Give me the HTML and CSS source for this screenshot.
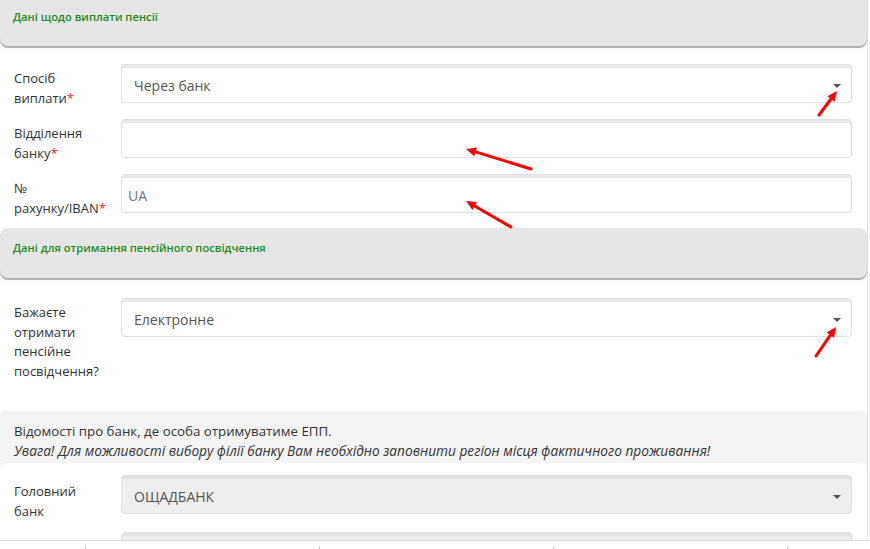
FILE: index.html
```html
<!DOCTYPE html>
<html lang="uk">
<head>
<meta charset="utf-8">
<title>Дані щодо виплати пенсії</title>
<link rel="stylesheet" href="styles.css">
</head>
<body>
<div class="page">
  <div class="section-head first"><span>Дані щодо виплати пенсії</span></div>

  <div class="row row-first">
    <div class="label">Спосіб виплати<span class="req">*</span></div>
    <div class="control select"><span class="value">Через банк</span><span class="caret"></span></div>
  </div>
  <div class="row">
    <div class="label">Відділення банку<span class="req">*</span></div>
    <div class="control"></div>
  </div>
  <div class="row row-last">
    <div class="label">№ рахунку/IBAN<span class="req">*</span></div>
    <div class="control input"><span class="placeholder">UA</span></div>
  </div>

  <div class="section-head"><span>Дані для отримання пенсійного посвідчення</span></div>

  <div class="row row-cert">
    <div class="label">Бажаєте отримати пенсійне посвідчення?</div>
    <div class="control select"><span class="value">Електронне</span><span class="caret"></span></div>
  </div>

  <div class="info">
    <p class="info-line">Відомості про банк, де особа отримуватиме ЕПП.</p>
    <p class="info-line warn">Увага! Для можливості вибору філії банку Вам необхідно заповнити регіон місця фактичного проживання!</p>
    <div class="panel">
      <div class="row">
        <div class="label">Головний банк</div>
        <div class="control select disabled"><span class="value">ОЩАДБАНК</span><span class="caret"></span></div>
      </div>
      <div class="row">
        <div class="label"></div>
        <div class="control select disabled"><span class="value"></span><span class="caret"></span></div>
      </div>
    </div>
  </div>
</div>

<footer class="tabbar">
  <div class="tab tab-first"></div>
  <div class="tab"></div>
  <div class="tab"></div>
  <div class="tab"></div>
  <div class="tab"></div>
</footer>

<svg class="annot" width="870" height="549" viewBox="0 0 870 549" aria-hidden="true">
  <g stroke="#ff0000" stroke-width="3" stroke-linecap="round" fill="none">
    <line x1="819" y1="115" x2="831" y2="99"/>
    <line x1="531" y1="169" x2="475.6" y2="151.9"/>
    <line x1="511" y1="227" x2="474.7" y2="206"/>
    <line x1="816" y1="356" x2="830.3" y2="335.2"/>
  </g>
  <g fill="#ff0000">
    <polygon points="837,91 834.6,101.7 827.4,96.3"/>
    <polygon points="466,149 476.9,147.6 474.3,156.2"/>
    <polygon points="466,201 476.9,202.1 472.4,209.9"/>
    <polygon points="836,327 834,337.8 826.6,332.6"/>
  </g>
</svg>
</body>
</html>
```

FILE: styles.css
```css
html, body {
  margin: 0;
  padding: 0;
  background: #ffffff;
}
body {
  font-family: "Open Sans", "Liberation Sans", sans-serif;
  font-size: 13px;
  color: #333333;
  width: 870px;
  height: 549px;
  overflow: hidden;
}
.page {
  width: 867px;
  border-right: 1px solid #e2e2e2;
  min-height: 549px;
}
.section-head {
  background: #e6e6e6;
  border-radius: 8px;
  padding: 12px 13px 22px;
  box-shadow: 0 2px 1px rgba(0, 0, 0, 0.32);
  margin-top: 10px;
}
.section-head.first {
  margin-top: -3px;
  border-radius: 0 0 8px 8px;
  padding-bottom: 21px;
}
.section-head span {
  display: block;
  font-size: 11.15px;
  line-height: 16px;
  font-weight: 600;
  color: #1f8a24;
}
.row {
  display: flex;
  align-items: flex-start;
  margin-top: 11px;
  padding: 0 15px 0 14px;
}
.row-first { margin-top: 18px; }
.row-cert { margin-top: 20px; }
.label {
  width: 92px;
  margin-right: 15px;
  padding-top: 5px;
  line-height: 19.5px;
  font-size: 13px;
  color: #333333;
}
.req { color: #e41b1b; }
.control {
  flex: 1;
  height: 39px;
  box-sizing: border-box;
  border: 1px solid #e0e0e0;
  border-radius: 4px;
  box-shadow: inset 0 3px 0 #e9e9e9;
  background: #ffffff;
  display: flex;
  align-items: center;
  justify-content: space-between;
  padding: 3px 10px 0 12px;
  font-size: 14px;
  color: #555555;
}
.control.input { padding-left: 6px; }
.control.disabled {
  background: #eeeeee;
  box-shadow: inset 0 3px 0 #e3e3e3;
}
.placeholder { color: #6f7a85; }
.caret {
  width: 0;
  height: 0;
  border-left: 4px solid transparent;
  border-right: 4px solid transparent;
  border-top: 4px solid #555555;
  margin-top: 1px;
}
.info {
  margin-top: 30px;
  background: #f4f4f4;
  border-radius: 6px;
  padding-top: 10px;
}
.info-line {
  margin: 0;
  padding: 0 14px;
  line-height: 20px;
  font-size: 13.3px;
  color: #333333;
}
.info-line.warn {
  font-style: italic;
  font-size: 13.7px;
}
.panel {
  margin-top: 2px;
  background: #ffffff;
  border-radius: 6px 6px 0 0;
  padding-top: 1px;
}
.panel .row { margin-top: 11px; }
.panel .row:first-child { margin-top: 11px; }
.panel .row:first-child .label { padding-top: 7px; }
.panel .row:first-child .control { margin-bottom: 0; }
.tabbar {
  position: fixed;
  left: 0;
  top: 540px;
  width: 870px;
  height: 20px;
  background: #ffffff;
  border-top: 1px solid #dcdcdc;
  display: flex;
}
.tab {
  width: 233px;
  flex: none;
  border-left: 1px solid #c8c8c8;
  margin-top: 5px;
}
.tab-first {
  width: 85px;
  border-left: none;
}
.annot {
  position: absolute;
  left: 0;
  top: 0;
  pointer-events: none;
}
```
